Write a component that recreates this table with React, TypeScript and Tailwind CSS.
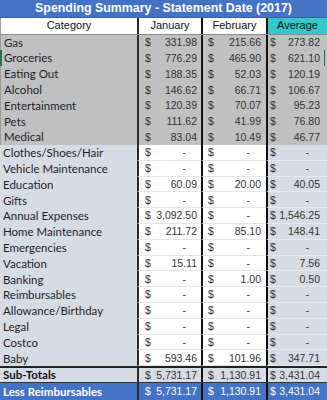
import React from "react";

type Row = { name: string; jan: string; feb: string; avg: string };

const gray: Row[] = [
  { name: "Gas", jan: "331.98", feb: "215.66", avg: "273.82" },
  { name: "Groceries", jan: "776.29", feb: "465.90", avg: "621.10" },
  { name: "Eating Out", jan: "188.35", feb: "52.03", avg: "120.19" },
  { name: "Alcohol", jan: "146.62", feb: "66.71", avg: "106.67" },
  { name: "Entertainment", jan: "120.39", feb: "70.07", avg: "95.23" },
  { name: "Pets", jan: "111.62", feb: "41.99", avg: "76.80" },
  { name: "Medical", jan: "83.04", feb: "10.49", avg: "46.77" },
];

const light: Row[] = [
  { name: "Clothes/Shoes/Hair", jan: "-", feb: "-", avg: "-" },
  { name: "Vehicle Maintenance", jan: "-", feb: "-", avg: "-" },
  { name: "Education", jan: "60.09", feb: "20.00", avg: "40.05" },
  { name: "Gifts", jan: "-", feb: "-", avg: "-" },
  { name: "Annual Expenses", jan: "3,092.50", feb: "-", avg: "1,546.25" },
  { name: "Home Maintenance", jan: "211.72", feb: "85.10", avg: "148.41" },
  { name: "Emergencies", jan: "-", feb: "-", avg: "-" },
  { name: "Vacation", jan: "15.11", feb: "-", avg: "7.56" },
  { name: "Banking", jan: "-", feb: "1.00", avg: "0.50" },
  { name: "Reimbursables", jan: "-", feb: "-", avg: "-" },
  { name: "Allowance/Birthday", jan: "-", feb: "-", avg: "-" },
  { name: "Legal", jan: "-", feb: "-", avg: "-" },
  { name: "Costco", jan: "-", feb: "-", avg: "-" },
  { name: "Baby", jan: "593.46", feb: "101.96", avg: "347.71" },
];

const catFont = { fontFamily: "Lato, 'Open Sans', sans-serif" };
const numFont = { fontFamily: "'Liberation Sans', Arial, sans-serif" };

function Money({ v, pl, pr }: { v: string; pl: string; pr: string }) {
  const dash = v === "-";
  return (
    <div className={`flex h-full items-center justify-between ${pl} ${pr}`} style={numFont}>
      <span>$</span>
      <span className={dash ? "pr-[11px]" : ""}>{v}</span>
    </div>
  );
}

export default function App() {
  return (
    <div className="relative w-[327px] h-[400px] overflow-hidden bg-white text-[10.5px] leading-none text-[#333]">
      {/* Title */}
      <div
        className="h-[17.5px] bg-[#4472c4] border-b border-[#3a5f9f] flex items-center justify-center text-white font-bold text-[12.4px]"
        style={numFont}
      >
        Spending Summary - Statement Date (2017)
      </div>
      {/* Header */}
      <div
        className="grid grid-cols-[137px_64px_65px_61px] h-[17px] border-b border-[#8c8c8c] text-[11px] text-[#111]"
        style={numFont}
      >
        <div className="flex items-center justify-center bg-white border-l border-[#9a9a9a]">Category</div>
        <div className="flex items-center justify-center bg-white border-l-2 border-[#2a2a2a]">January</div>
        <div className="flex items-center justify-center bg-white border-l-2 border-[#111]">February</div>
        <div className="flex items-center justify-center bg-[#36c8c8] border-l-2 border-[#111]">Average</div>
      </div>
      {gray.map((r) => (
        <div key={r.name} className="grid grid-cols-[137px_64px_65px_61px] h-[15.8px] bg-[#c0c0c0]">
          <div className="flex items-center pl-[3px] text-[11.5px] text-[#1e1e2a] border-l border-[#9a9a9a]" style={catFont}>
            {r.name}
          </div>
          <div className="border-l-2 border-[#2a2a2a]">
            <Money v={r.jan} pl="pl-[6px]" pr="pr-[4px]" />
          </div>
          <div className="border-l-2 border-[#111]">
            <Money v={r.feb} pl="pl-[5px]" pr="pr-[5px]" />
          </div>
          <div className="border-l-2 border-[#111]">
            <Money v={r.avg} pl="pl-[2px]" pr="pr-[7px]" />
          </div>
        </div>
      ))}
      {light.map((r) => (
        <div key={r.name} className="grid grid-cols-[137px_64px_65px_61px] h-[15.8px]">
          <div className="flex items-center pl-[3px] text-[11.5px] text-[#1e1e2a] bg-[#d6dce4]" style={catFont}>
            {r.name}
          </div>
          <div className="border-l-2 border-[#2a2a2a] bg-white border-b border-b-[#e4e4e4]">
            <Money v={r.jan} pl="pl-[6px]" pr="pr-[4px]" />
          </div>
          <div className="border-l-2 border-[#111] bg-white border-b border-b-[#e4e4e4]">
            <Money v={r.feb} pl="pl-[5px]" pr="pr-[5px]" />
          </div>
          <div className="border-l-2 border-[#111] bg-[#d6dce4] border-b border-b-[#e6e9ee]">
            <Money v={r.avg} pl="pl-[2px]" pr="pr-[7px]" />
          </div>
        </div>
      ))}
      {/* Sub-Totals */}
      <div className="grid grid-cols-[137px_64px_65px_61px] h-[15.8px] bg-[#d6dce4] border-t-2 border-[#222]">
        <div className="flex items-center pl-[3px] text-[11.5px] font-bold text-[#111]" style={catFont}>
          Sub-Totals
        </div>
        <div className="border-l-2 border-[#2a2a2a]">
          <Money v="5,731.17" pl="pl-[6px]" pr="pr-[4px]" />
        </div>
        <div className="border-l-2 border-[#111]">
          <Money v="1,130.91" pl="pl-[5px]" pr="pr-[5px]" />
        </div>
        <div className="border-l-2 border-[#111]">
          <Money v="3,431.04" pl="pl-[2px]" pr="pr-[7px]" />
        </div>
      </div>
      {/* Less Reimbursables */}
      <div className="grid grid-cols-[137px_64px_65px_61px] h-[18px] bg-[#4472c4] border-t border-[#333] text-white">
        <div className="flex items-center pl-[3px] text-[11.5px] font-bold" style={catFont}>
          Less Reimbursables
        </div>
        <div className="border-l-2 border-[#2a2a2a]">
          <Money v="5,731.17" pl="pl-[6px]" pr="pr-[4px]" />
        </div>
        <div className="border-l-2 border-[#111]">
          <Money v="1,130.91" pl="pl-[5px]" pr="pr-[5px]" />
        </div>
        <div className="border-l-2 border-[#111]">
          <Money v="3,431.04" pl="pl-[2px]" pr="pr-[7px]" />
        </div>
      </div>
      {/* selection marks */}
      <div className="absolute left-0 top-[50px] w-[2px] h-[16px] bg-[#217346]" />
      <div className="absolute right-[2px] top-[50px] w-[1px] h-[16px] bg-[#217346]" />
    </div>
  );
}
